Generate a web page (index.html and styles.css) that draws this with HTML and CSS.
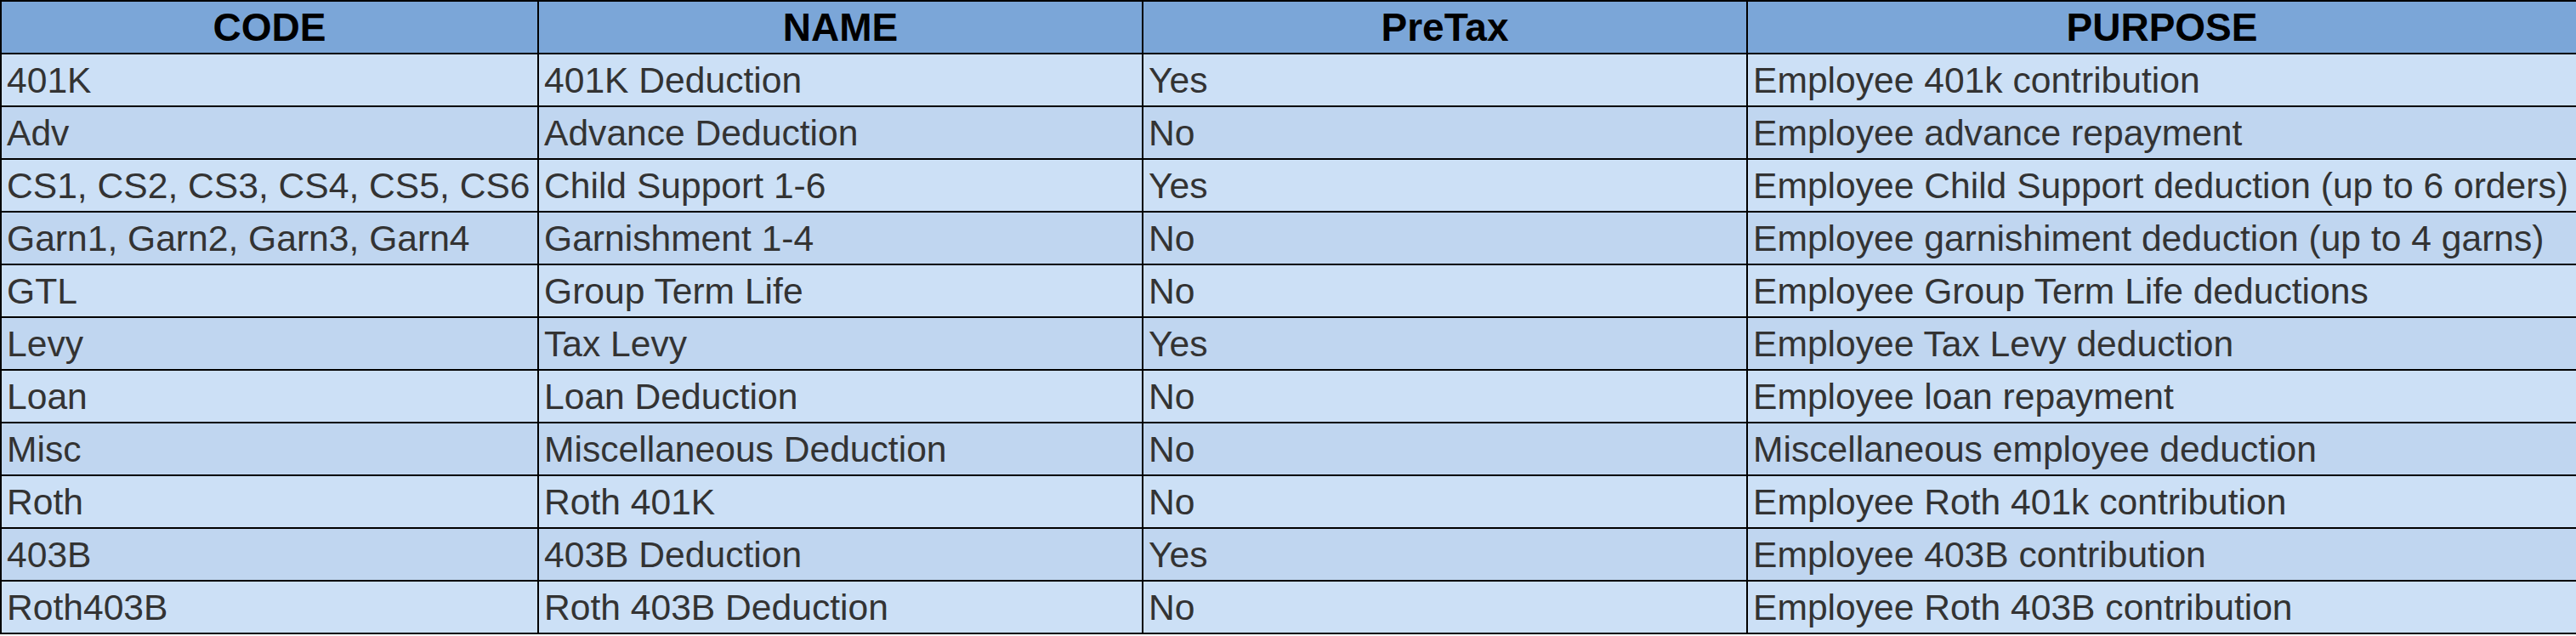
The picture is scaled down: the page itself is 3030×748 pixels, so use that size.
FILE: index.html
```html
<!DOCTYPE html>
<html>
<head>
<meta charset="utf-8">
<link rel="stylesheet" href="styles.css">
</head>
<body>
<table class="codes">
  <colgroup>
    <col class="c1"><col class="c2"><col class="c3"><col class="c4">
  </colgroup>
  <thead>
    <tr><th>CODE</th><th>NAME</th><th>PreTax</th><th>PURPOSE</th></tr>
  </thead>
  <tbody>
    <tr><td>401K</td><td>401K Deduction</td><td>Yes</td><td>Employee 401k contribution</td></tr>
    <tr><td>Adv</td><td>Advance Deduction</td><td>No</td><td>Employee advance repayment</td></tr>
    <tr><td>CS1, CS2, CS3, CS4, CS5, CS6</td><td>Child Support 1-6</td><td>Yes</td><td>Employee Child Support deduction (up to 6 orders)</td></tr>
    <tr><td>Garn1, Garn2, Garn3, Garn4</td><td>Garnishment 1-4</td><td>No</td><td>Employee garnishiment deduction (up to 4 garns)</td></tr>
    <tr><td>GTL</td><td>Group Term Life</td><td>No</td><td>Employee Group Term Life deductions</td></tr>
    <tr><td>Levy</td><td>Tax Levy</td><td>Yes</td><td>Employee Tax Levy deduction</td></tr>
    <tr><td>Loan</td><td>Loan Deduction</td><td>No</td><td>Employee loan repayment</td></tr>
    <tr><td>Misc</td><td>Miscellaneous Deduction</td><td>No</td><td>Miscellaneous employee deduction</td></tr>
    <tr><td>Roth</td><td>Roth 401K</td><td>No</td><td>Employee Roth 401k contribution</td></tr>
    <tr><td>403B</td><td>403B Deduction</td><td>Yes</td><td>Employee 403B contribution</td></tr>
    <tr><td>Roth403B</td><td>Roth 403B Deduction</td><td>No</td><td>Employee Roth 403B contribution</td></tr>
  </tbody>
</table>
</body>
</html>
```
FILE: styles.css
```css
html, body {
  margin: 0;
  padding: 0;
  background: #ffffff;
}

.codes {
  width: 3030px;
  table-layout: fixed;
  border-collapse: collapse;
  border: 2px solid #000;
  font-family: "Liberation Sans", Arial, sans-serif;
}

.c1 { width: 632px; }
.c2 { width: 711px; }
.c3 { width: 711px; }
.c4 { width: 976px; }

.codes th,
.codes td {
  border: 2px solid #000;
  padding: 0 0 0 6px;
  height: 60px;
  vertical-align: middle;
  white-space: nowrap;
  overflow: hidden;
}

.codes th {
  background: #7ba6d8;
  color: #000;
  font-weight: bold;
  font-size: 46px;
  text-align: center;
  padding: 0;
  height: 60px;
}

.codes td {
  color: #333333;
  font-size: 42.6px;
  text-align: left;
}

.codes tbody tr:nth-child(odd) td {
  background: #cce0f6;
}

.codes tbody tr:nth-child(even) td {
  background: #c0d6f0;
}
```
